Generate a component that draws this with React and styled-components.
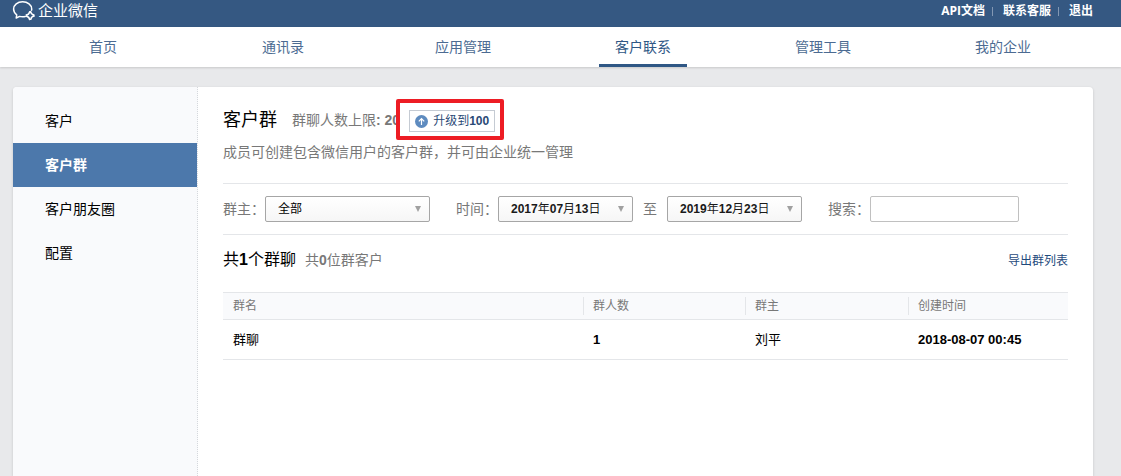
import React from "react";
import styled, { createGlobalStyle } from "styled-components";

const tabs = ["首页", "通讯录", "应用管理", "客户联系", "管理工具", "我的企业"];
const menu = ["客户", "客户群", "客户朋友圈", "配置"];
const groups = [
  { name: "群聊", count: 1, owner: "刘平", created: "2018-08-07 00:45" },
];

function LogoIcon() {
  return (
    <svg width="24" height="22" viewBox="0 0 24 22" fill="none" stroke="#fff">
      <path
        d="M19.600 10.200c.1-.5.1-.9.1-1.300C19.700 4.900 15.600 1.800 10.600 1.800S1.600 4.900 1.600 9.100c0 2.500 1.200 4.400 3.100 5.800L4.200 18l3.400-1.600c1 .3 2 .4 3 .4 1 0 1.900-.1 2.700-.3"
        strokeWidth="1.500"
        strokeLinejoin="round"
        strokeLinecap="round"
      />
      <path
        d="M18.600 11.500c.2 1.900 1.200 3 3.300 3.400M22.200 16.100c-1.900.2-3 1.200-3.400 3.200M17.600 19.600c-.2-1.900-1.200-3-3.200-3.400M14.200 15c1.900-.2 3-1.200 3.400-3.200"
        strokeWidth="1.500"
        strokeLinecap="round"
      />
    </svg>
  );
}

function ArrowUpIcon() {
  return (
    <svg width="13" height="13" viewBox="0 0 13 13" fill="none">
      <circle cx="6.500" cy="6.500" r="6.500" fill="#5e8bbf" />
      <path d="M6.500 10V3.800M3.800 6.300l2.700-2.700 2.700 2.700" stroke="#fff" strokeWidth="1.200" />
    </svg>
  );
}

function DateField({ id, label, year, month, day }) {
  return (
    <DateButton type="button" id={id} aria-label={label}>
      <span>
        <Num>{year}</Num>年<Num>{month}</Num>月<Num>{day}</Num>日
      </span>
      <Caret />
    </DateButton>
  );
}

export default function App() {
  return (
    <>
      <GlobalStyle />
      <TopBar>
        <Brand href="#">
          <LogoIcon />
          企业微信
        </Brand>
        <TopLinks>
          <TopLink href="#">API文档</TopLink>
          <TopLink href="#">联系客服</TopLink>
          <TopLink href="#">退出</TopLink>
        </TopLinks>
      </TopBar>
      <Nav>
        {tabs.map((tab) => (
          <NavItem key={tab}>
            <NavLink href="#" $active={tab === "客户联系"}>
              {tab}
            </NavLink>
          </NavItem>
        ))}
      </Nav>
      <Card>
        <Sidebar>
          {menu.map((item) => (
            <SideLink key={item} href="#" $active={item === "客户群"}>
              {item}
            </SideLink>
          ))}
        </Sidebar>
        <Main>
          <TitleRow>
            <Title>客户群</Title>
            <Limit>
              群聊人数上限<Num>: 20</Num>
            </Limit>
            <Highlight>
              <UpgradeButton type="button">
                <ArrowUpIcon />
                <span>
                  升级到<Num>100</Num>
                </span>
              </UpgradeButton>
            </Highlight>
          </TitleRow>
          <Description>
            成员可创建包含微信用户的客户群，并可由企业统一管理
          </Description>
          <Filters>
            <Field>
              <label htmlFor="owner">群主：</label>
              <SelectWrap>
                <Select id="owner">
                  <option>全部</option>
                </Select>
                <Caret />
              </SelectWrap>
            </Field>
            <Field>
              <label htmlFor="from">时间：</label>
              <DateField id="from" label="开始时间" year="2017" month="07" day="13" />
              <Between>至</Between>
              <DateField id="to" label="结束时间" year="2019" month="12" day="23" />
            </Field>
            <Field>
              <label htmlFor="search">搜索：</label>
              <SearchInput id="search" type="text" />
            </Field>
          </Filters>
          <Summary>
            <Total>
              共<Num>1</Num>个群聊
            </Total>
            <Customers>
              共<Num>0</Num>位群客户
            </Customers>
            <ExportLink href="#">导出群列表</ExportLink>
          </Summary>
          <Table>
            <colgroup>
              <col />
              <col width="162" />
              <col width="163" />
              <col width="160" />
            </colgroup>
            <thead>
              <tr>
                <Th><span>群名</span></Th>
                <Th><span>群人数</span></Th>
                <Th><span>群主</span></Th>
                <Th><span>创建时间</span></Th>
              </tr>
            </thead>
            <tbody>
              {groups.map((group) => (
                <tr key={group.created}>
                  <Td>{group.name}</Td>
                  <Td><Num>{group.count}</Num></Td>
                  <Td>{group.owner}</Td>
                  <Td><Num>{group.created}</Num></Td>
                </tr>
              ))}
            </tbody>
          </Table>
        </Main>
      </Card>
    </>
  );
}

const GlobalStyle = createGlobalStyle`
  * {
    box-sizing: border-box;
  }
  html, body, #root {
    height: 100%;
  }
  body {
    margin: 0;
    background: #e8e9eb;
    color: #000;
    font: 14px/20px "Liberation Sans", "Noto Sans CJK SC", sans-serif;
  }
  #root {
    display: flex;
    flex-direction: column;
  }
  a {
    text-decoration: none;
  }
  button, input, select {
    font-family: inherit;
  }
`;

const Num = styled.span`
  font-weight: bold;
`;

const TopBar = styled.header`
  display: flex;
  justify-content: space-between;
  height: 27px;
  flex-shrink: 0;
  padding: 0 28px 0 12px;
  background: #355882;
`;

const Brand = styled.a`
  display: flex;
  align-items: center;
  gap: 2px;
  height: 22px;
  color: #fff;
  font-size: 15px;
`;

const TopLinks = styled.nav`
  display: flex;
  align-items: center;
  height: 22px;
`;

const TopLink = styled.a`
  color: #fff;
  font: bold 12px/12px "Open Sans", "Noto Sans CJK SC", sans-serif;

  & + & {
    display: flex;
    align-items: center;
  }
  & + &:before {
    content: "";
    width: 1px;
    height: 9px;
    margin: 0 10px 0 7px;
    background: #8297b3;
  }
`;

const Nav = styled.nav`
  display: flex;
  height: 40px;
  flex-shrink: 0;
  padding: 0 28px 0 13px;
  background: #fff;
  box-shadow: 0 1px 2px rgba(0, 0, 0, 0.14);
`;

const NavItem = styled.div`
  flex: 1;
  display: flex;
  justify-content: center;
`;

const NavLink = styled.a`
  padding: 0 16px;
  color: ${(props) => (props.$active ? "#2f5785" : "#4c6b92")};
  line-height: 40px;
  box-shadow: ${(props) => (props.$active ? "inset 0 -3px #2f5785" : "none")};
`;

const Card = styled.div`
  display: flex;
  flex: 1;
  margin: 20px 28px 0 13px;
  background: #fff;
  border-radius: 4px 4px 0 0;
  box-shadow: 0 1px 3px rgba(0, 0, 0, 0.16);
`;

const Sidebar = styled.aside`
  width: 185px;
  flex-shrink: 0;
  padding-top: 12px;
  background: #f9fafc;
  border-right: 1px dotted #d5d8dc;
  border-radius: 4px 0 0 0;
`;

const SideLink = styled.a`
  display: block;
  padding-left: 32px;
  line-height: 44px;
  color: ${(props) => (props.$active ? "#fff" : "#000")};
  font-weight: ${(props) => (props.$active ? "bold" : "normal")};
  background: ${(props) => (props.$active ? "#4c78ab" : "none")};
`;

const Main = styled.main`
  flex: 1;
  min-width: 0;
  padding: 21px 25px 0;
`;

const TitleRow = styled.div`
  display: flex;
  align-items: center;
  height: 24px;
`;

const Title = styled.h1`
  margin: 0 15px 0 0;
  font-size: 18px;
  font-weight: normal;
  line-height: 24px;
`;

const Limit = styled.span`
  color: #787878;
`;

/* red callout frame around the upgrade button */
const Highlight = styled.div`
  position: relative;
  align-self: flex-end;
  margin-left: 9px;

  &:before {
    content: "";
    position: absolute;
    top: -11px;
    right: -9px;
    bottom: -8px;
    left: -13px;
    border: 4px solid #ed1c24;
    border-radius: 2px;
    pointer-events: none;
  }
`;

const UpgradeButton = styled.button`
  display: flex;
  align-items: center;
  gap: 5px;
  height: 22px;
  padding: 0 5px;
  background: #fff;
  border: 1px solid #c5cbd3;
  color: #2b4a76;
  font-size: 12px;
  line-height: 20px;
`;

const Description = styled.p`
  margin: 10px 0 21px;
  color: #787878;
`;

const Filters = styled.form`
  display: flex;
  flex-wrap: wrap;
  gap: 12px 26px;
  padding: 12px 0;
  border-top: 1px solid #e4e6e9;
  border-bottom: 1px solid #e4e6e9;
  color: #787878;
`;

const Field = styled.div`
  display: flex;
  align-items: center;
`;

const Between = styled.span`
  margin: 0 10px;
`;

const SelectWrap = styled.div`
  display: flex;
  align-items: center;
  width: 165px;
  height: 26px;
  padding-right: 8px;
  background: linear-gradient(#fff, #f6f6f6);
  border: 1px solid #a6a6a6;
  border-radius: 2px;
`;

const Select = styled.select`
  flex: 1;
  height: 24px;
  padding: 0 0 0 12px;
  appearance: none;
  background: none;
  border: 0;
  color: #000;
  font-size: 12px;
`;

const DateButton = styled.button`
  display: flex;
  align-items: center;
  justify-content: space-between;
  width: 135px;
  height: 26px;
  padding: 0 8px 0 12px;
  background: linear-gradient(#fff, #f6f6f6);
  border: 1px solid #a6a6a6;
  border-radius: 2px;
  color: #1a1a1a;
  font-size: 12px;
  line-height: 20px;
`;

const Caret = styled.span`
  border: 3px solid transparent;
  border-top: 6px solid #a0a0a0;
  border-bottom: 0;
`;

const SearchInput = styled.input`
  width: 149px;
  height: 26px;
  padding: 0 8px;
  border: 1px solid #c0c0c0;
  border-radius: 2px;
  font-size: 12px;
`;

const Summary = styled.div`
  display: flex;
  align-items: baseline;
  height: 22px;
  margin: 15px 0 20px;
`;

const Total = styled.h2`
  margin: 0 9px 0 0;
  font-size: 16px;
  font-weight: normal;
`;

const Customers = styled.span`
  color: #787878;
`;

const ExportLink = styled.a`
  margin-left: auto;
  color: #1f4a7c;
  font-size: 12px;
`;

const Table = styled.table`
  width: 100%;
  table-layout: fixed;
  border-collapse: collapse;
`;

const Th = styled.th`
  height: 27px;
  padding: 0;
  background: #f9fafc;
  border-top: 1px solid #e4e6e9;
  border-bottom: 1px solid #e4e6e9;
  color: #787878;
  font-size: 12px;
  font-weight: normal;
  line-height: 18px;
  text-align: left;

  span {
    display: block;
    padding-left: 10px;
  }
  & + & span {
    padding-left: 9px;
    border-left: 1px solid #e4e6e9;
  }
`;

const Td = styled.td`
  height: 40px;
  padding: 0 10px;
  border-bottom: 1px solid #e4e6e9;
  font-size: 13px;
`;
